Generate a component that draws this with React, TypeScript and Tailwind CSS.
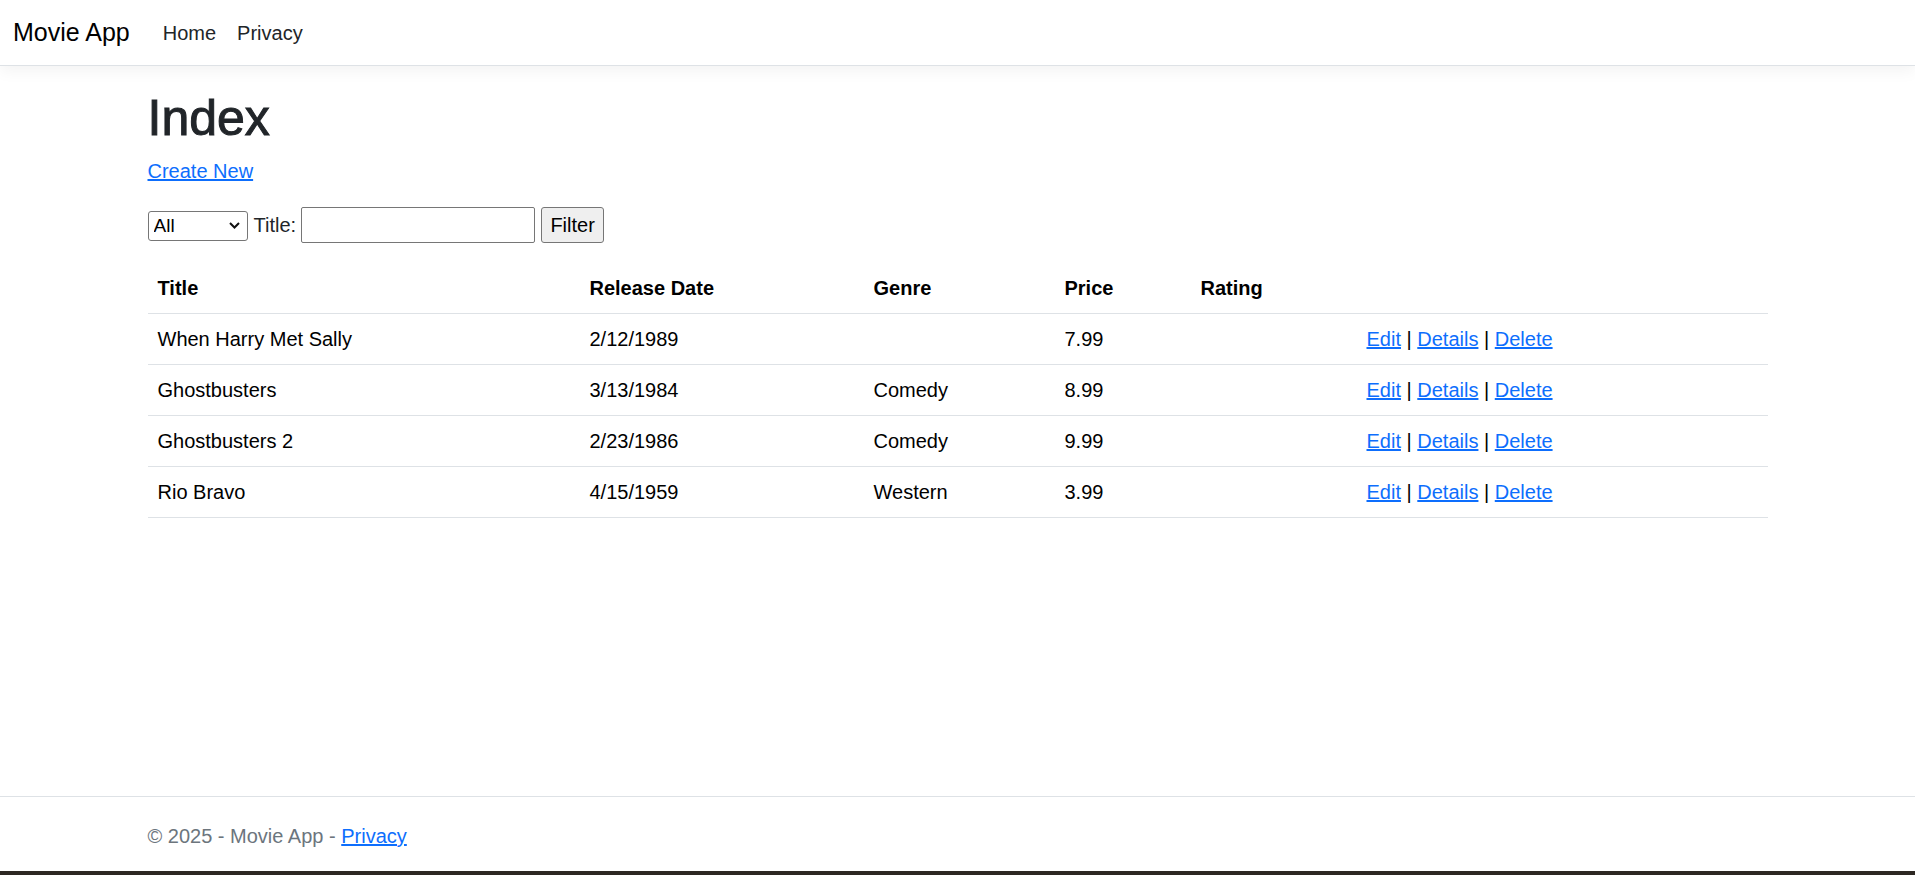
import { useState } from "react";

type Movie = {
  title: string;
  releaseDate: string;
  genre: string;
  price: string;
  rating: string;
};

const movies: Movie[] = [
  { title: "When Harry Met Sally", releaseDate: "2/12/1989", genre: "", price: "7.99", rating: "" },
  { title: "Ghostbusters", releaseDate: "3/13/1984", genre: "Comedy", price: "8.99", rating: "" },
  { title: "Ghostbusters 2", releaseDate: "2/23/1986", genre: "Comedy", price: "9.99", rating: "" },
  { title: "Rio Bravo", releaseDate: "4/15/1959", genre: "Western", price: "3.99", rating: "" },
];

function Chevron() {
  return (
    <svg width="11" height="7" viewBox="0 0 11 7" className="pointer-events-none absolute right-[8px] top-[12px]">
      <path d="M1 1 L5.5 5.5 L10 1" fill="none" stroke="#111" strokeWidth="2" />
    </svg>
  );
}

export default function App() {
  const [genre, setGenre] = useState("All");
  const [search, setSearch] = useState("");

  return (
    <div className="flex h-screen flex-col overflow-hidden bg-white font-['Liberation_Sans',Arial,sans-serif] text-[20px] leading-[30px] text-[#212529]">
      {/* ナビゲーション */}
      <header className="relative z-10 h-[66px] shrink-0 border-b border-[#dee2e6] bg-white shadow-[0_5px_15px_rgba(0,0,0,0.05)]">
        <nav className="flex h-[65px] items-center pl-[13px]">
          <a className="text-[25px] leading-[37px] text-black">Movie App</a>
          <a className="ml-[33px] text-[#212529]">Home</a>
          <a className="ml-[21px] text-[#212529]">Privacy</a>
        </nav>
      </header>

      <main className="flex-1">
        <div className="mx-auto max-w-[1650px] px-[15px] pt-[22px]">
          <h1 className="mb-[8px] text-[50px] font-normal leading-[60px] text-[#212529] [-webkit-text-stroke:1px_#212529]">
            Index
          </h1>
          <p className="mb-[20px]">
            <a className="text-[#0d6efd] underline">Create New</a>
          </p>

          {/* フィルター */}
          <form className="mb-[20px] flex h-[37px] items-center" onSubmit={(e) => e.preventDefault()}>
            <div className="relative h-[30px] w-[100px]">
              <select
                value={genre}
                onChange={(e) => setGenre(e.target.value)}
                className="h-[30px] w-[100px] appearance-none rounded-[3px] border border-[#767676] bg-white pl-[5px] text-[19px] leading-[28px] text-black [appearance:none] [-webkit-appearance:none]"
              >
                <option>All</option>
                <option>Comedy</option>
                <option>Western</option>
              </select>
              <Chevron />
            </div>
            <span className="ml-[6px] mr-[5px]">Title:</span>
            <input
              type="text"
              value={search}
              onChange={(e) => setSearch(e.target.value)}
              className="h-[36px] w-[234px] rounded-[2px] border border-[#767676] bg-white px-[3px]"
            />
            <button
              type="submit"
              className="ml-[6px] h-[36px] w-[63px] rounded-[3px] border border-[#767676] bg-[#efefef] text-black"
            >
              Filter
            </button>
          </form>

          {/* 一覧 */}
          <table className="w-full table-fixed border-collapse text-black">
            <colgroup>
              <col className="w-[432px]" />
              <col className="w-[284px]" />
              <col className="w-[191px]" />
              <col className="w-[136px]" />
              <col className="w-[166px]" />
              <col />
            </colgroup>
            <thead>
              <tr className="border-b border-[#dee2e6]">
                <th className="px-[10px] py-[10px] text-left font-bold">Title</th>
                <th className="px-[10px] py-[10px] text-left font-bold">Release Date</th>
                <th className="px-[10px] py-[10px] text-left font-bold">Genre</th>
                <th className="px-[10px] py-[10px] text-left font-bold">Price</th>
                <th className="px-[10px] py-[10px] text-left font-bold">Rating</th>
                <th className="px-[10px] py-[10px]"></th>
              </tr>
            </thead>
            <tbody>
              {movies.map((m, i) => (
                <tr key={i} className="border-b border-[#dee2e6]">
                  <td className="px-[10px] py-[10px]">{m.title}</td>
                  <td className="px-[10px] py-[10px]">{m.releaseDate}</td>
                  <td className="px-[10px] py-[10px]">{m.genre}</td>
                  <td className="px-[10px] py-[10px]">{m.price}</td>
                  <td className="px-[10px] py-[10px]">{m.rating}</td>
                  <td className="px-[10px] py-[10px] whitespace-nowrap">
                    <a className="text-[#0d6efd] underline">Edit</a> |{" "}
                    <a className="text-[#0d6efd] underline">Details</a> |{" "}
                    <a className="text-[#0d6efd] underline">Delete</a>
                  </td>
                </tr>
              ))}
            </tbody>
          </table>
        </div>
      </main>

      {/* フッター */}
      <footer className="h-[75px] shrink-0 border-t border-[#dee2e6] text-[#6c757d]">
        <div className="mx-auto max-w-[1650px] px-[15px] pt-[24px] whitespace-nowrap">
          © 2025 - Movie App - <a className="text-[#0d6efd] underline">Privacy</a>
        </div>
      </footer>
      <div className="h-[4px] shrink-0 bg-[#2d2823]"></div>
    </div>
  );
}
